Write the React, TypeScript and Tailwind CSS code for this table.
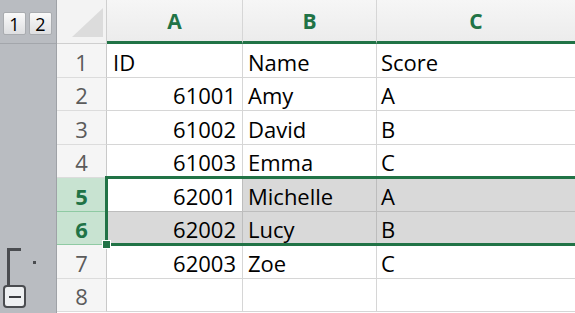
const rows = [
  { id: "ID", name: "Name", score: "Score", header: true },
  { id: "61001", name: "Amy", score: "A" },
  { id: "61002", name: "David", score: "B" },
  { id: "61003", name: "Emma", score: "C" },
  { id: "62001", name: "Michelle", score: "A" },
  { id: "62002", name: "Lucy", score: "B" },
  { id: "62003", name: "Zoe", score: "C" },
  { id: "", name: "", score: "" },
];

const font = { fontFamily: '"Open Sans", "Liberation Sans", sans-serif' };

function LevelButton({ n }: { n: string }) {
  return (
    <div className="flex h-[23px] w-[23px] items-center justify-center rounded-[2px] border border-[#a9acb0] bg-gradient-to-b from-[#fafafa] to-[#dedfe1] text-[18px] leading-none text-black">
      {n}
    </div>
  );
}

function Gutter() {
  return (
    <div className="flex w-[57px] shrink-0 flex-col border-r border-[#9fa2a7] bg-[#b9bcc1]">
      <div className="flex h-[44px] items-start gap-[3px] border-b border-[#a3a6ab] pl-[3px] pt-[12px]">
        <LevelButton n="1" />
        <LevelButton n="2" />
      </div>
      {/* outline group bracket for rows 5-7 */}
      <div className="relative flex-1">
        <div className="absolute left-[7px] top-[204px] h-[3px] w-[14px] bg-[#4a4c50]" />
        <div className="absolute left-[7px] top-[204px] h-[37px] w-[3px] bg-[#4a4c50]" />
        <div className="absolute left-[33px] top-[217px] h-[3px] w-[3px] bg-[#4a4c50]" />
        <div className="absolute left-[3px] top-[241px] flex h-[23px] w-[23px] items-center justify-center rounded-[4px] border-2 border-[#4a4c50] bg-[#eef0f2]">
          <div className="h-[2px] w-[12px] bg-[#3a3c40]" />
        </div>
      </div>
    </div>
  );
}

export default function App() {
  return (
    <div className="flex h-[313px] w-[575px] overflow-hidden bg-white" style={font}>
      <Gutter />
      <div className="relative flex-1">
        {/* column headers */}
        <div className="flex h-[44px]">
          <div className="relative w-[50px] shrink-0 border-r border-b border-[#cfcfcf] bg-[#f3f3f3]">
            <svg className="absolute inset-0" width="50" height="44">
              <polygon points="15,37 46,37 46,8" fill="#dcdcdc" />
            </svg>
          </div>
          {["A", "B", "C"].map((c, i) => (
            <div
              key={c}
              className={`flex items-center justify-center border-b-[3px] border-b-[#217346] bg-gradient-to-b from-[#f6f6f6] to-[#ececec] pt-[3px] text-[21px] font-bold text-[#217346] ${
                i === 0 ? "w-[136px] border-r border-r-[#d6d6d6]" : i === 1 ? "w-[134px] border-r border-r-[#d6d6d6]" : "flex-1"
              }`}
            >
              {c}
            </div>
          ))}
        </div>

        {/* rows */}
        {rows.map((r, i) => {
          const n = i + 1;
          const sel = n === 5 || n === 6;
          const active = n === 5;
          return (
            <div key={n} className="flex h-[33.5px] text-[22px] leading-none">
              <div
                className={`flex w-[50px] shrink-0 items-center justify-center border-r border-b pt-[3px] ${
                  sel
                    ? "border-r-[#c9c9c9] border-b-[#8fcaa3] bg-[#c8e3d1] font-bold text-[#217346]"
                    : "border-r-[#c9c9c9] border-b-[#dcdcdc] bg-[#f5f5f5] text-[#5b5b5b]"
                }`}
              >
                {n}
              </div>
              <div
                className={`flex w-[136px] items-center border-r border-b px-[6px] pt-[3px] text-black ${
                  r.header ? "justify-start" : "justify-end"
                } ${active ? "bg-white" : sel ? "bg-[#d9d9d9]" : "bg-white"} ${
                  sel ? "border-[#bdbdbd]" : "border-[#d6d6d6]"
                }`}
              >
                {r.id}
              </div>
              <div
                className={`flex w-[134px] items-center border-r border-b px-[5px] pt-[3px] text-black ${
                  sel ? "border-[#bdbdbd] bg-[#d9d9d9]" : "border-[#d6d6d6] bg-white"
                }`}
              >
                {r.name}
              </div>
              <div
                className={`flex flex-1 items-center border-b px-[4px] pt-[3px] text-black ${
                  sel ? "border-[#bdbdbd] bg-[#d9d9d9]" : "border-[#d6d6d6] bg-white"
                }`}
              >
                {r.score}
              </div>
            </div>
          );
        })}

        {/* selection range A5:C6 */}
        <div className="pointer-events-none absolute left-[48px] right-[-4px] top-[176px] h-[70px] border-[3px] border-[#217346]" />
        <div className="pointer-events-none absolute left-[45px] top-[240px] h-[9px] w-[9px] border border-white bg-[#217346]" />
      </div>
    </div>
  );
}
